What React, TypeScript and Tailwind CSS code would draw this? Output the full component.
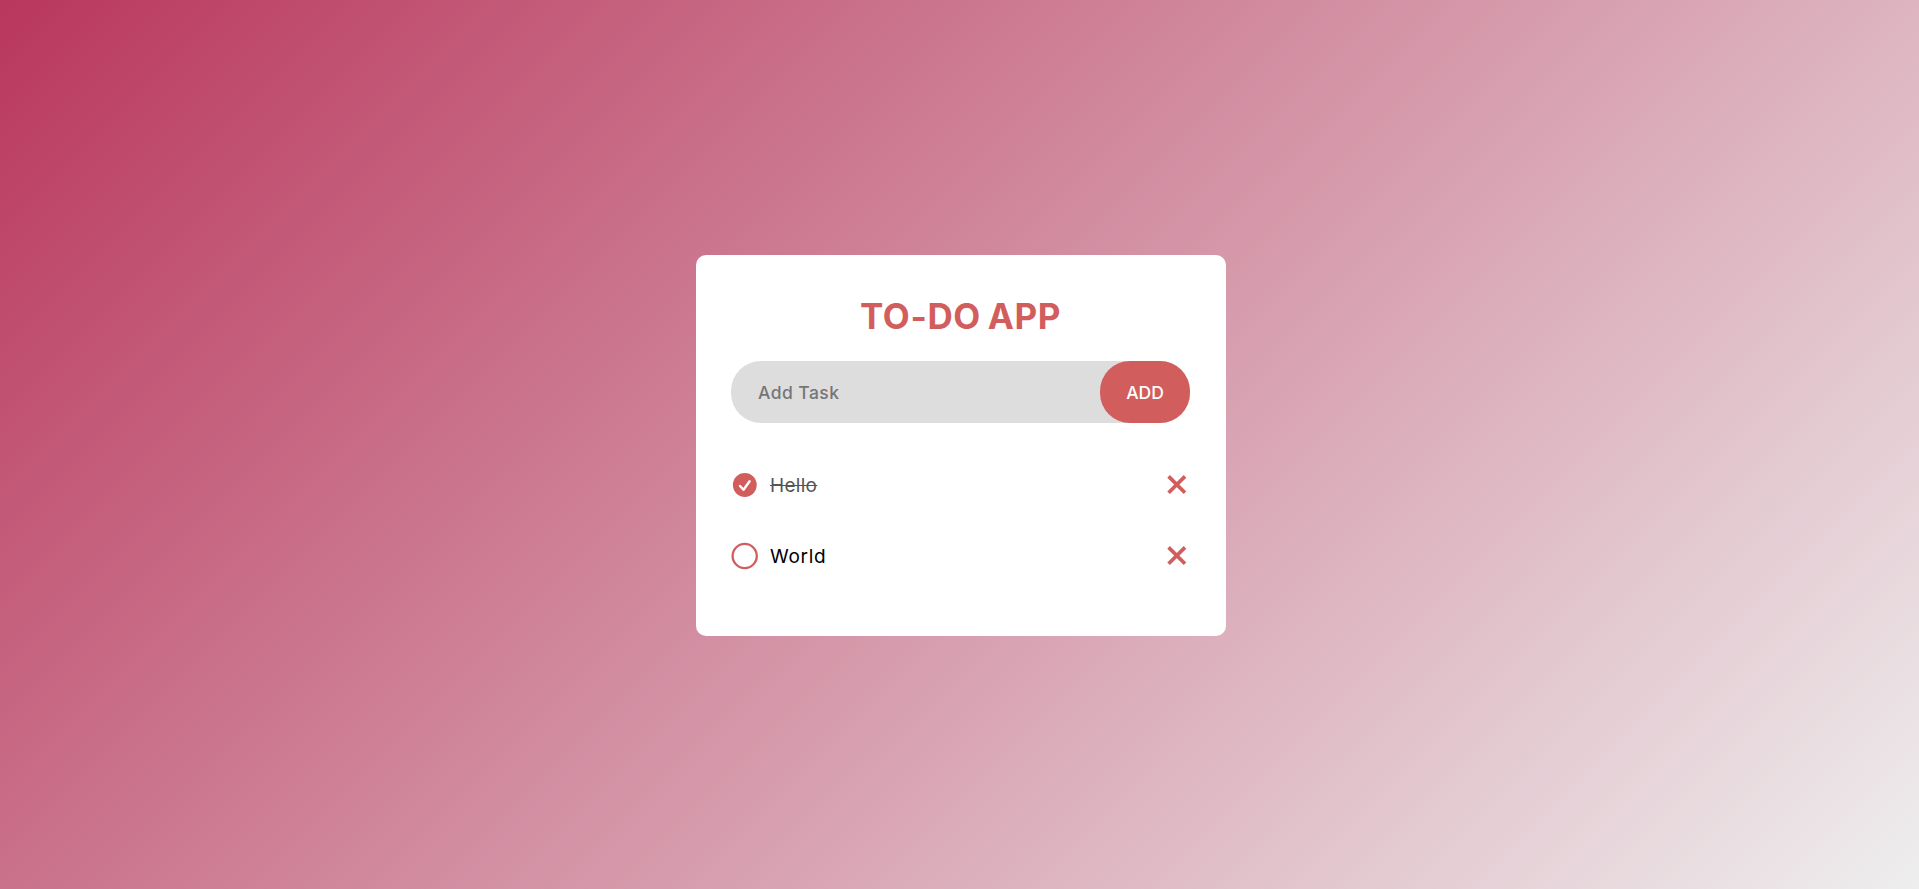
import { useState } from "react";

type Task = { id: number; text: string; done: boolean };

const initialTasks: Task[] = [
  { id: 1, text: "Hello", done: true },
  { id: 2, text: "World", done: false },
];

function CheckMark({ done }: { done: boolean }) {
  return (
    <svg width="27" height="28" viewBox="0 0 27 28" fill="none" className="block">
      {done ? (
        <>
          <circle cx="13.8" cy="14" r="11.9" fill="#d25d5d" />
          <path d="M9 15 12.5 18.8 18.6 10.3" stroke="#fff" strokeWidth="2.4" strokeLinecap="round" strokeLinejoin="round" />
        </>
      ) : (
        <circle cx="13.7" cy="14" r="12.1" stroke="#d25d5d" strokeWidth="2.3" />
      )}
    </svg>
  );
}

function Cross() {
  return (
    <svg width="20" height="20" viewBox="0 0 20 20" className="block">
      <path d="M1.6 1.4 18 17.8M18 1.4 1.6 17.8" stroke="#d25d5d" strokeWidth="3.7" />
    </svg>
  );
}

export default function App() {
  const [tasks, setTasks] = useState(initialTasks);
  const [draft, setDraft] = useState("");

  const add = () => {
    if (!draft.trim()) return;
    setTasks([...tasks, { id: Date.now(), text: draft, done: false }]);
    setDraft("");
  };

  return (
    <div className="flex min-h-screen items-start justify-center bg-[linear-gradient(135deg,#b9375d,#eeeeee)] pt-[255px] pl-[3px] font-['Inter',sans-serif]">
      <main className="min-h-[381px] w-[530px] rounded-[10px] bg-white pt-[39px] pr-[36px] pb-[45px] pl-[35px]">
        <h1 className="text-center text-[35px] leading-[44px] font-bold tracking-[0.6px] [word-spacing:-2px] text-[#d25d5d]">TO-DO APP</h1>
        <div className="mt-[23px] flex h-[62px] rounded-[30px] bg-[#dddddd]">
          <input
            className="min-w-0 flex-1 bg-transparent pt-[2px] pl-[27px] text-[17.5px] font-medium tracking-[0.45px] outline-none placeholder:text-[#757575]"
            placeholder="Add Task"
            value={draft}
            onChange={(e) => setDraft(e.target.value)}
          />
          <button onClick={add} className="w-[90px] rounded-[30px] bg-[#d25d5d] pt-[3px] text-[17.5px] font-medium text-white">
            ADD
          </button>
        </div>
        <ul className="mt-[26px]">
          {tasks.map((task) => (
            <li key={task.id} className="flex h-[71px] items-center">
              <button onClick={() => setTasks(tasks.map((t) => (t.id === task.id ? { ...t, done: !t.done } : t)))}>
                <CheckMark done={task.done} />
              </button>
              <span
                className={
                  task.done
                    ? "ml-[12px] flex-1 pt-[3px] text-[19px] tracking-[0.3px] text-[#555555] line-through"
                    : "ml-[12px] flex-1 pt-[3px] text-[19px] tracking-[0.7px] text-black"
                }
              >
                {task.text}
              </span>
              <button className="mr-[3px]" onClick={() => setTasks(tasks.filter((t) => t.id !== task.id))}>
                <Cross />
              </button>
            </li>
          ))}
        </ul>
      </main>
    </div>
  );
}
